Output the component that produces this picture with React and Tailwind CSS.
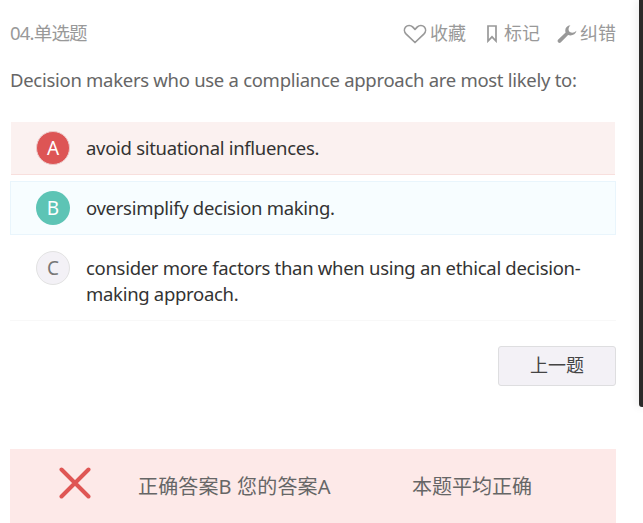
const FONT = "font-['Noto_Sans','Noto_Sans_CJK_SC',sans-serif]"

const options = [
  {
    id: 'A',
    lines: ['avoid situational influences.'],
    row: 'mx-px mt-[28px] h-[53px] border-b border-b-[#f8dfdd] bg-[#fbf1f0] pl-[25px] pt-[9px]',
    badge: 'bg-[#dd5555] text-white border border-[#eccaca]',
  },
  {
    id: 'B',
    lines: ['oversimplify decision making.'],
    row: 'mt-[6px] h-[54px] border border-[#e9f5fc] bg-[#f7fdff] pl-[25px] pt-[9px]',
    badge: 'bg-[#5dc4b5] text-white',
  },
  {
    id: 'C',
    lines: ['consider more factors than when using an ethical decision-', 'making approach.'],
    row: 'h-[86px] border-b border-b-[#f8f8f8] pl-[26px] pt-[16px]',
    badge: 'bg-[#f3f1f6] text-[#777] border border-[#e2e2e2]',
  },
]

function HeartIcon() {
  return (
    <svg width="24" height="20" viewBox="0 0 24 20" fill="none" stroke="#999" strokeWidth="1.7" strokeLinejoin="round">
      <path d="M12 18.500 3.200 10.200C1.100 8.100 .9 4.900 2.600 3 4.500 1 7.700 1 9.600 2.900L12 5.300l2.400-2.400c1.900-1.900 5.100-1.900 7 .1 1.700 1.900 1.500 5.100-.6 7.200Z" />
    </svg>
  )
}

function BookmarkIcon() {
  return (
    <svg width="10" height="18" viewBox="0 0 10 18" fill="none" stroke="#999" strokeWidth="1.7">
      <path d="M1 1H9V16L5 11.800 1 16Z" />
    </svg>
  )
}

function WrenchIcon() {
  return (
    <svg width="20" height="20" viewBox="0 0 20 20">
      <path
        d="M13.400 1.200C9.400 1.600 7.400 4.800 8.600 8.500L1 15.800C-.3 17.700 1.900 19.800 3.700 18.500L11.100 11.100C14.800 12.300 18.700 10.500 19.500 6.800 17.300 8.800 14.900 9.300 12.900 7.900 10.900 6.300 11.200 3.600 13.400 1.200Z"
        fill="#999"
      />
    </svg>
  )
}

function Option({ option }) {
  return (
    <div className={`flex items-start ${option.row}`}>
      <span className={`flex size-[34px] shrink-0 items-center justify-center rounded-full text-[19px] leading-none ${option.badge}`}>
        {option.id}
      </span>
      <div className="ml-4 pt-[4px] text-[18.5px] leading-[26px] text-[#333]">
        {option.lines.map((line) => (
          <p key={line} className="whitespace-nowrap tracking-[-0.3px]">
            {line}
          </p>
        ))}
      </div>
    </div>
  )
}

export default function App() {
  return (
    <div className={`relative h-[523px] w-[643px] overflow-hidden bg-white ${FONT}`}>
      <div className="flex h-full flex-col pl-[10px] pr-[27px]">
        <header className="mt-[20px] flex h-[27px] items-center text-[18px] text-[#999]">
          <span className="-mt-px text-[18.5px] tracking-[-0.8px]">04.单选题</span>
          <div className="ml-auto flex items-center">
            <HeartIcon />
            <span className="ml-[3px] w-[36px] whitespace-nowrap">收藏</span>
            <span className="ml-[21px] flex">
              <BookmarkIcon />
            </span>
            <span className="ml-[7px] w-[36px] whitespace-nowrap">标记</span>
            <span className="ml-[17px] flex">
              <WrenchIcon />
            </span>
            <span className="ml-[3px] w-[36px] whitespace-nowrap">纠错</span>
          </div>
        </header>

        <h1 className="mt-[19px] h-[28px] whitespace-nowrap text-[18.5px] leading-[28px] tracking-[-0.29px] text-[#666]">
          Decision makers who use a compliance approach are most likely to:
        </h1>

        <div className="flex flex-col">
          {options.map((option) => (
            <Option key={option.id} option={option} />
          ))}
        </div>

        <button className="mt-[25px] h-[40px] w-[118px] shrink-0 self-end rounded-[3px] border border-[#dedee0] bg-[#f3f1f6] pb-[2px] text-[18px] leading-none text-[#444]">
          上一题
        </button>

        <div className="mt-[63px] flex h-[74px] shrink-0 items-center bg-[#fde9e8] text-[20px] text-[#666]">
          <svg className="mb-[6px] ml-[49px]" width="32" height="32" viewBox="0 0 32 32" stroke="#df5654" strokeWidth="4" strokeLinecap="round">
            <path d="M2.500 2.500 29.500 29.500M29.500 2.500 2.500 29.500" />
          </svg>
          <span className="ml-[47px] w-[274px] whitespace-nowrap pt-[2px] tracking-[0.15px]">正确答案B 您的答案A</span>
          <span className="whitespace-nowrap pt-[2px]">本题平均正确</span>
        </div>
      </div>

      {/* edge of the window behind */}
      <div className="absolute right-0 top-0 h-[407px] w-[4px] rounded-bl-[3px] bg-[#2b2a29] shadow-[0_0_10px_rgba(0,0,0,0.16)]" />
    </div>
  )
}
